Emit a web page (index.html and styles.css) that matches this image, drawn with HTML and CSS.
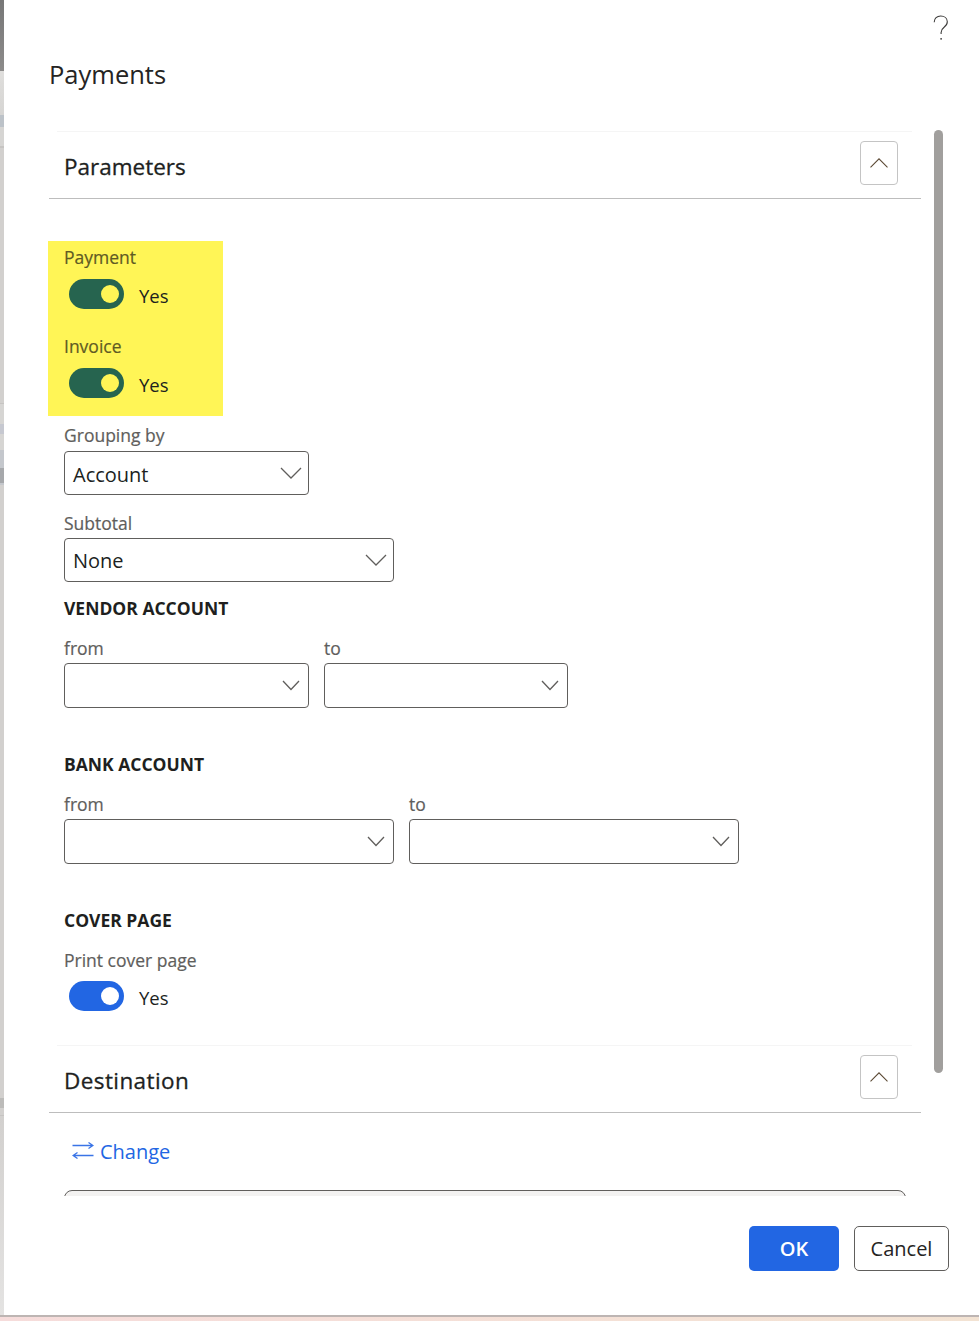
FILE: index.html
```html
<!DOCTYPE html>
<html lang="en">
  <head>
    <meta charset="UTF-8" />
    <meta name="viewport" content="width=device-width, initial-scale=1.0" />
    <title>Payments</title>
    <link rel="stylesheet" href="styles.css">
  </head>
  <body>
    <div class="page">
      <div class="backdrop"></div>
      <div class="dialog">
        <div class="help">
          <svg width="16" height="26" viewBox="0 0 16 26" aria-label="Help">
            <path d="M1.2 7.2C1.2 3.4 4 1 7.7 1c3.800 0 6.600 2.400 6.600 5.800 0 2.500-1.200 4-3.200 5.500-2 1.500-3 2.800-3 5.200v1.500" fill="none" stroke="#3b3a39" stroke-width="1.100" />
            <circle cx="8.100" cy="23.800" r="0.900" fill="#3b3a39" />
          </svg>
        </div>
        <h1 class="title">Payments</h1>

        <div class="scroller">
          <div class="thumb"></div>

          <section class="section">
            <div class="section-head">
              <h2>Parameters</h2>
              <div class="collapse">
                <svg width="18" height="10" viewBox="0 0 18 10"><path d="M0.500 9.300L9 0.800l8.500 8.500" fill="none" stroke="#5c4a35" stroke-width="1.100" /></svg>
              </div>
            </div>

            <div class="form">
              <div class="highlight">
                <div class="label">Payment</div>
                <div class="toggle-row">
                  <span class="toggle green"><span class="knob"></span></span>
                  <span class="toggle-text">Yes</span>
                </div>
                <div class="label next">Invoice</div>
                <div class="toggle-row">
                  <span class="toggle green"><span class="knob"></span></span>
                  <span class="toggle-text">Yes</span>
                </div>
              </div>

              <div class="label grouping">Grouping by</div>
              <div class="select small">
                <span>Account</span>
                <svg width="22" height="12" viewBox="0 0 22 12"><path d="M1 1l10 10L21 1" fill="none" stroke="#605e5c" stroke-width="1.300" /></svg>
              </div>

              <div class="label subtotal">Subtotal</div>
              <div class="select large">
                <span>None</span>
                <svg width="22" height="12" viewBox="0 0 22 12"><path d="M1 1l10 10L21 1" fill="none" stroke="#605e5c" stroke-width="1.300" /></svg>
              </div>

              <div class="group-title vendor">VENDOR ACCOUNT</div>
              <div class="pair">
                <div>
                  <div class="label">from</div>
                  <div class="select small tall">
                    <svg width="18" height="11" viewBox="0 0 18 11"><path d="M1 1l8 8.500L17 1" fill="none" stroke="#605e5c" stroke-width="1.300" /></svg>
                  </div>
                </div>
                <div>
                  <div class="label">to</div>
                  <div class="select narrow tall">
                    <svg width="18" height="11" viewBox="0 0 18 11"><path d="M1 1l8 8.500L17 1" fill="none" stroke="#605e5c" stroke-width="1.300" /></svg>
                  </div>
                </div>
              </div>

              <div class="group-title">BANK ACCOUNT</div>
              <div class="pair">
                <div>
                  <div class="label">from</div>
                  <div class="select large tall">
                    <svg width="18" height="11" viewBox="0 0 18 11"><path d="M1 1l8 8.500L17 1" fill="none" stroke="#605e5c" stroke-width="1.300" /></svg>
                  </div>
                </div>
                <div>
                  <div class="label">to</div>
                  <div class="select large tall">
                    <svg width="18" height="11" viewBox="0 0 18 11"><path d="M1 1l8 8.500L17 1" fill="none" stroke="#605e5c" stroke-width="1.300" /></svg>
                  </div>
                </div>
              </div>

              <div class="group-title">COVER PAGE</div>
              <div class="label cover">Print cover page</div>
              <div class="toggle-row">
                <span class="toggle blue"><span class="knob"></span></span>
                <span class="toggle-text">Yes</span>
              </div>
            </div>
          </section>

          <section class="section destination">
            <div class="section-head">
              <h2>Destination</h2>
              <div class="collapse">
                <svg width="18" height="10" viewBox="0 0 18 10"><path d="M0.500 9.300L9 0.800l8.500 8.500" fill="none" stroke="#5c4a35" stroke-width="1.100" /></svg>
              </div>
            </div>
            <div class="change">
              <svg width="22" height="17" viewBox="0 0 22 17"><path d="M0.500 3.500h20.500M16.500 0.500l4.500 3-4.500 3M21.500 13.500H1M5.500 10.500L1 13.500l4.500 3" fill="none" stroke="#3a74e6" stroke-width="1.300" /></svg>
              <span>Change</span>
            </div>
            <div class="destination-box"></div>
          </section>
        </div>

        <div class="footer">
          <div class="btn primary">OK</div>
          <div class="btn">Cancel</div>
        </div>
      </div>
    </div>
    <div class="bottom-strip"></div>
  </body>
</html>
```

FILE: styles.css
```css
* {
  margin: 0;
  padding: 0;
  box-sizing: border-box;
}
html,
body {
  height: 1321px;
  overflow: hidden;
}
body {
  font-family: "Open Sans", "Liberation Sans", sans-serif;
  background: #fff;
  color: #201f1e;
}
.page {
  display: flex;
  height: 1315px;
}

/* sliver of the page behind the dialog */
.backdrop {
  width: 4px;
  background: linear-gradient(
    #777 0,
    #8c8b8a 71px,
    #e0dfdd 71px,
    #dcdbd9 85px,
    #d6d5d3 115px,
    #bcc2c8 115px,
    #bcc2c8 127px,
    #d6d5d3 127px,
    #d6d5d3 146px,
    #c6c4c2 146px,
    #c6c4c2 148px,
    #d2d0ce 148px,
    #d2d0ce 403px,
    #c6c4c2 403px,
    #c6c4c2 404px,
    #d6d5d3 404px,
    #d6d5d3 424px,
    #c6c8d0 424px,
    #c6c8d0 434px,
    #d6d5d3 434px,
    #d6d5d3 450px,
    #c4c7cc 450px,
    #c4c7cc 468px,
    #a6a8ab 468px,
    #a6a8ab 483px,
    #c4c7cc 483px,
    #c4c7cc 485px,
    #d2d0ce 485px,
    #d2d0ce 1098px,
    #bcbbb9 1098px,
    #bcbbb9 1108px,
    #d2d0ce 1108px,
    #d2d0ce 1115px,
    #c6c4c2 1115px,
    #c6c4c2 1116px,
    #d2d0ce 1116px,
    #e4e3e2 100%
  );
}
.bottom-strip {
  height: 6px;
  border-top: 2px solid #bdb5b3;
  background: linear-gradient(90deg, #f6dcdb, #f3e3d3);
}

.dialog {
  flex: 1;
  display: flex;
  flex-direction: column;
  position: relative;
}
.help {
  position: absolute;
  top: 15px;
  right: 30px;
}
.title {
  font-size: 25.500px;
  font-weight: 400;
  line-height: 34px;
  color: #252423;
  margin: 57px 0 0 45px;
}
.scroller {
  position: relative;
  height: 1105px;
  padding-top: 40px;
  overflow: hidden;
}
.thumb {
  position: absolute;
  top: 39px;
  left: 930px;
  width: 9px;
  height: 943px;
  border-radius: 5px;
  background: #a19f9d;
}

.section {
  width: 872px;
  margin-left: 45px;
}
.section-head {
  height: 68px;
  display: flex;
  justify-content: space-between;
  padding: 10px 23px 0 15px;
  border-bottom: 1px solid #bdbdbd;
  position: relative;
}
.section-head::before {
  content: "";
  position: absolute;
  top: 0;
  left: 8px;
  right: 9px;
  border-top: 1px solid #f5f5f5;
}
.section-head h2 {
  font-size: 22.500px;
  font-weight: 500;
  line-height: 30px;
  margin-top: 11px;
  color: #201f1e;
  -webkit-text-stroke: 0.300px #201f1e;
}
.destination .section-head h2 {
  letter-spacing: 0.400px;
}
.collapse {
  width: 38px;
  height: 44px;
  border: 1px solid #c4c4c4;
  border-radius: 4px;
  display: flex;
  align-items: center;
  justify-content: center;
}

.form {
  padding: 42px 0 0 15px;
}
.label {
  font-size: 17.500px;
  line-height: 20px;
  padding-bottom: 2px;
  color: #605e5c;
  -webkit-text-stroke: 0.200px currentColor;
}
.highlight {
  width: 175px;
  height: 175px;
  margin-left: -16px;
  padding: 6px 0 0 16px;
  background: #fff556;
}
.highlight .label {
  color: #5f5b24;
}
.highlight .next {
  margin-top: 27px;
}
.toggle-row {
  display: flex;
  align-items: center;
  height: 30px;
  margin: 10px 0 0 5px;
}
.toggle {
  width: 55px;
  height: 30px;
  border-radius: 15px;
  display: flex;
  align-items: center;
  justify-content: flex-end;
  padding-right: 5px;
}
.toggle.green {
  background: #26644f;
}
.toggle.blue {
  background: #2266e3;
}
.knob {
  width: 18px;
  height: 18px;
  border-radius: 50%;
  background: #fff;
}
.green .knob {
  background: #fff556;
}
.toggle-text {
  font-size: 18.500px;
  margin: 2px 0 0 15px;
}

.grouping {
  margin-top: 9px;
}
.subtotal {
  margin-top: 18px;
}
.select {
  display: flex;
  align-items: center;
  justify-content: space-between;
  height: 44px;
  margin-top: 4px;
  padding: 2px 6px 0 8px;
  border: 1px solid #605e5c;
  border-radius: 4px;
  font-size: 20px;
  background: #fff;
}
.select svg {
  margin-left: auto;
  margin-top: -2px;
}
.select.small {
  width: 245px;
}
.select.narrow {
  width: 244px;
}
.select.large {
  width: 330px;
  padding-top: 0;
}
.select.large svg {
  margin-top: 0;
}
.select.tall {
  height: 45px;
  margin-top: 3px;
  padding-right: 8px;
}
.subtotal + .select {
  margin-top: 3px;
}
.group-title {
  font-size: 17.500px;
  font-weight: 700;
  line-height: 22px;
  margin: 45px 0 19px;
  color: #201f1e;
}
.group-title.vendor {
  margin-top: 15px;
}
.pair {
  display: flex;
  gap: 15px;
}
.cover + .toggle-row {
  margin-top: 9px;
}

.destination {
  margin-top: 34px;
}
.change {
  display: flex;
  align-items: center;
  gap: 6px;
  height: 30px;
  margin: 23px 0 0 23px;
  font-size: 20px;
  color: #2266e3;
}
.change svg {
  margin-top: -2px;
}
.destination-box {
  width: 842px;
  height: 60px;
  margin: 24px 0 0 15px;
  border: 1px solid #605e5c;
  border-radius: 8px;
  background: #f3f2f1;
}

.footer {
  display: flex;
  justify-content: flex-end;
  gap: 15px;
  padding: 30px 30px 0 0;
}
.btn {
  height: 45px;
  width: 95px;
  border: 1px solid #605e5c;
  border-radius: 5px;
  display: flex;
  align-items: center;
  justify-content: center;
  font-size: 20px;
  color: #252423;
}
.btn.primary {
  width: 90px;
  border: none;
  background: #2266e3;
  color: #fff;
  font-weight: 600;
}
```
